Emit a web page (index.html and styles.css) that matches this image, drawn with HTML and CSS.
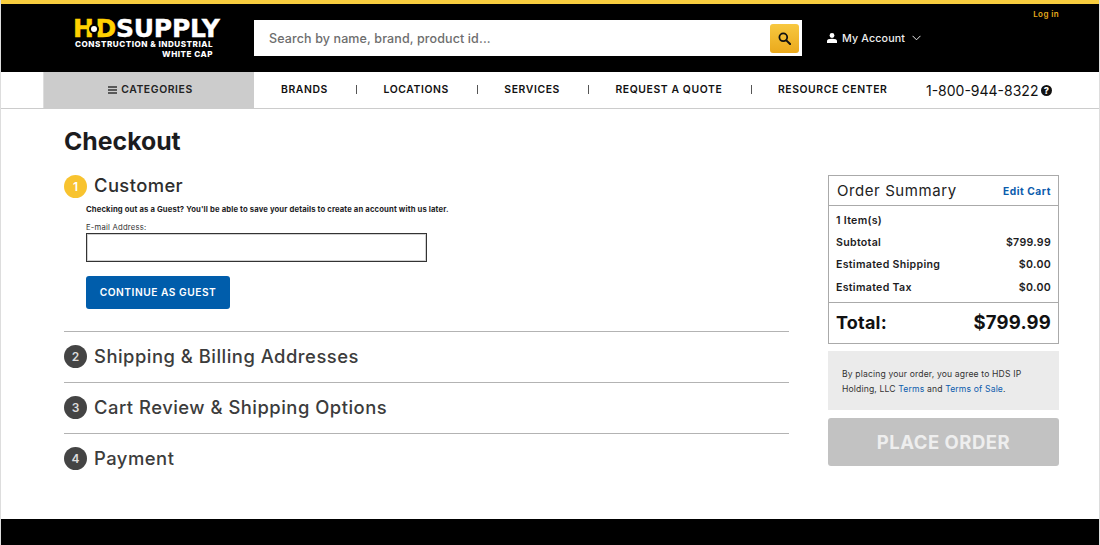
FILE: index.html
```html
<!DOCTYPE html>
<html lang="en">
<head>
<meta charset="utf-8">
<title>Checkout</title>
<link rel="stylesheet" href="styles.css">
</head>
<body>
<div class="page">
  <header class="top">
    <a class="login">Log in</a>
    <div class="logo">
      <div class="logo-main"><span class="hd"><span>H</span><svg class="bolt" viewBox="0 0 14 14" width="10" height="10"><circle cx="7" cy="7" r="7" fill="#000"/><circle cx="7" cy="7" r="4.2" fill="#fff"/></svg><span>D</span></span><span class="supply">SUPPLY</span></div>
      <div class="logo-sub">CONSTRUCTION &amp; INDUSTRIAL</div>
      <div class="logo-sub">WHITE CAP</div>
    </div>
    <div class="search">
      <span class="search-text">Search by name, brand, product id...</span>
      <button class="search-btn"><svg viewBox="0 0 14 14" width="13" height="13"><circle cx="5.7" cy="5.7" r="4.2" fill="none" stroke="#111" stroke-width="1.9"/><path d="M9 9l4 4" stroke="#111" stroke-width="2.2" stroke-linecap="round"/></svg></button>
    </div>
    <div class="account">
      <svg viewBox="0 0 12 12" width="10" height="10"><circle cx="6" cy="3" r="2.9" fill="#fff"/><path d="M0 12V9.6C0 7.8 2 6.8 6 6.8s6 1 6 2.8V12z" fill="#fff"/></svg>
      <span>My Account</span>
      <svg viewBox="0 0 10 6" width="9" height="6"><path d="M.6.6L5 5 9.4.6" fill="none" stroke="#eee" stroke-width="1.1"/></svg>
    </div>
  </header>
  <nav class="nav">
    <div class="cats"><svg viewBox="0 0 9 8" width="9" height="8"><path d="M0 1h9M0 4h9M0 7h9" stroke="#333" stroke-width="1.5"/></svg><span>CATEGORIES</span></div>
    <div class="links">
      <a>BRANDS</a><i></i><a>LOCATIONS</a><i></i><a>SERVICES</a><i></i><a>REQUEST A QUOTE</a><i></i><a>RESOURCE CENTER</a>
    </div>
    <div class="phone"><span>1-800-944-8322</span><svg viewBox="0 0 12 12" width="11" height="11"><circle cx="6" cy="6" r="6" fill="#111"/><text x="6" y="9.6" text-anchor="middle" class="q">?</text></svg></div>
  </nav>
  <main class="main">
    <h1>Checkout</h1>
    <div class="cols">
      <section class="steps">
        <div class="step first">
          <div class="step-head"><span class="num active">1</span><h2 class="dark">Customer</h2></div>
          <div class="step-body">
            <p class="guest">Checking out as a Guest? You'll be able to save your details to create an account with us later.</p>
            <label class="email-label">E-mail Address:</label>
            <div class="email"></div>
            <button class="continue">CONTINUE AS GUEST</button>
          </div>
        </div>
        <div class="step"><div class="step-head"><span class="num">2</span><h2>Shipping &amp; Billing Addresses</h2></div></div>
        <div class="step"><div class="step-head"><span class="num">3</span><h2>Cart Review &amp; Shipping Options</h2></div></div>
        <div class="step"><div class="step-head"><span class="num">4</span><h2>Payment</h2></div></div>
      </section>
      <aside class="side">
        <div class="summary">
          <div class="sum-head"><h3>Order Summary</h3><a>Edit Cart</a></div>
          <div class="sum-rows">
            <div class="row"><span>1 Item(s)</span></div>
            <div class="row"><span>Subtotal</span><span>$799.99</span></div>
            <div class="row"><span>Estimated Shipping</span><span>$0.00</span></div>
            <div class="row"><span>Estimated Tax</span><span>$0.00</span></div>
          </div>
          <div class="total"><span class="total-label">Total:</span><span>$799.99</span></div>
        </div>
        <div class="agree">By placing your order, you agree to HDS IP Holding, LLC <a>Terms</a> and <a>Terms of Sale</a>.</div>
        <button class="place">PLACE ORDER</button>
      </aside>
    </div>
  </main>
  <footer class="foot"></footer>
</div>
</body>
</html>
```
FILE: styles.css
```css
* { box-sizing: border-box; }
html, body { margin: 0; height: 100%; }
body { font-family: "Inter", "Liberation Sans", sans-serif; color: #1c1c1e; background: #fff; }
.page { width: 1100px; height: 545px; border: 1px solid #ddd; border-width: 0 1px; display: flex; flex-direction: column; overflow: hidden; }

.top { position: relative; height: 72px; flex: none; background: #000; border-top: 4px solid #f8cd3e; display: flex; align-items: center; }
.login { position: absolute; top: 5px; right: 40px; font-size: 8px; font-weight: 600; color: #e8ae1d; letter-spacing: .4px; }
.logo { width: 253px; padding-left: 74px; padding-right: 33px; color: #fff; text-align: right; }
.logo-main { display: flex; font-family: "DejaVu Sans", sans-serif; font-size: 25px; line-height: 21px; font-weight: 700; letter-spacing: -.25px; width: 146px; margin-left: -2px; -webkit-text-stroke: .4px; }
.hd { display: flex; align-items: center; color: #ffd100; width: 43px; flex: none; position: relative; justify-content: space-between; }
.bolt { position: absolute; left: 16px; top: 6px; }
.logo-sub { font-size: 8.1px; line-height: 10px; font-weight: 800; letter-spacing: .5px; white-space: nowrap; width: 138px; }
.search { width: 548px; height: 36px; background: #fff; display: flex; align-items: center; justify-content: space-between; padding: 0 3px 0 15px; }
.search-text { font-size: 12.5px; font-weight: 500; color: #6d6d6d; letter-spacing: .12px; }
.search-btn { width: 29px; height: 29px; border: 0; padding: 0; border-radius: 3px; background: linear-gradient(#f8c840, #eaa91c); display: flex; align-items: center; justify-content: center; }
.account { margin-left: 25px; display: flex; align-items: center; gap: 5px; font-size: 10.7px; font-weight: 500; color: #eee; letter-spacing: .15px; }
.account svg:last-child { margin-left: 2px; }

.nav { height: 37px; flex: none; border-bottom: 1px solid #ccc; display: flex; padding-left: 42px; }
.cats { width: 211px; height: 36px; background: #ccc; border-left: 1px solid #ddd; padding: 0 0 1px 3px; display: flex; align-items: center; justify-content: center; gap: 4px; font-size: 10.4px; font-weight: 600; color: #222; letter-spacing: .6px; }
.links { margin-left: 27px; padding-bottom: 1px; display: flex; align-items: center; font-size: 10.4px; font-weight: 600; color: #111; letter-spacing: .6px; gap: 26.25px; }
.links a { white-space: nowrap; }
.links i { width: 1px; height: 9px; background: #555; margin-left: 2px; }
.phone { margin-left: 38.5px; display: flex; align-items: center; gap: 3px; font-size: 14px; font-weight: 400; color: #111; white-space: nowrap; }
.q { font: 800 10px "Inter", sans-serif; fill: #fff; }

.main { flex: 1; padding: 18px 40px 0 63px; }
h1 { margin: 0; font-size: 24.8px; line-height: 29px; font-weight: 700; color: #1c1c1e; }
.cols { display: flex; justify-content: space-between; margin-top: 19px; }
.steps { width: 725px; }
.step { border-top: 1px solid #b3b3b3; padding-top: 13px; height: 51px; }
.step.first { border-top: 0; padding-top: 0; height: 156px; margin-top: 0; }
.step-head { display: flex; align-items: center; gap: 7px; height: 22px; }
.num { width: 23px; height: 23px; flex: none; border-radius: 50%; background: #444; color: #ddd; font-size: 12px; font-weight: 600; display: flex; align-items: center; justify-content: center; }
.num.active { background: #f8c32f; color: #fff; }
h2 { margin: 0; font-size: 18.4px; line-height: 22px; font-weight: 500; color: #3c3c3c; letter-spacing: .5px; white-space: nowrap; }
h2.dark { color: #2e2e2e; margin-top: -2px; letter-spacing: .4px; }
.step-body { padding-left: 22px; }
.guest { margin: 7px 0 0; font-size: 7.7px; line-height: 11px; font-weight: 700; color: #1c1c1e; letter-spacing: .13px; white-space: nowrap; }
.email-label { display: block; margin-top: 7px; font-size: 7.7px; line-height: 11px; color: #333; letter-spacing: .2px; }
.email { width: 341px; height: 29px; border: 1px solid #333; box-shadow: inset 0 0 0 1px rgba(0,0,0,.18); background: #fff; }
.continue { display: block; width: 144px; height: 33px; margin-top: 14px; border: 0; padding: 0 0 2px; border-radius: 3px; background: #005dab; color: #fff; font-family: inherit; font-size: 10.2px; font-weight: 600; letter-spacing: .52px; }

.side { width: 231px; }
.summary { border: 1px solid #aaa; }
.sum-head { height: 30px; display: flex; align-items: center; justify-content: space-between; padding: 0 7px 0 8px; border-bottom: 1px solid #aaa; }
h3 { margin: 0; font-size: 15px; font-weight: 400; color: #222; letter-spacing: .58px; }
.sum-head a { font-size: 10.2px; font-weight: 700; color: #0b5cad; letter-spacing: .55px; }
.sum-rows { padding: 3px 7px 4px; border-bottom: 1px solid #aaa; }
.row { height: 22.3px; display: flex; align-items: center; justify-content: space-between; font-size: 10.6px; font-weight: 600; color: #1c1c1e; letter-spacing: .3px; }
.total { height: 40px; display: flex; align-items: center; justify-content: space-between; padding: 0 7px 2px; font-size: 18.5px; font-weight: 700; color: #111; letter-spacing: .2px; }
.total-label { font-size: 18px; }
.agree { height: 59px; margin-top: 7px; background: #ebebeb; padding: 16px 14px 0; font-size: 8.6px; line-height: 15px; color: #333; letter-spacing: .15px; }
.agree a { color: #0b5cad; }
.place { display: block; width: 231px; height: 48px; margin-top: 8px; border: 0; padding: 0; border-radius: 3px; background: #c2c2c2; color: #eee; font-family: inherit; font-size: 18.5px; font-weight: 700; letter-spacing: .5px; }

.foot { height: 26px; flex: none; background: #000; }
```
